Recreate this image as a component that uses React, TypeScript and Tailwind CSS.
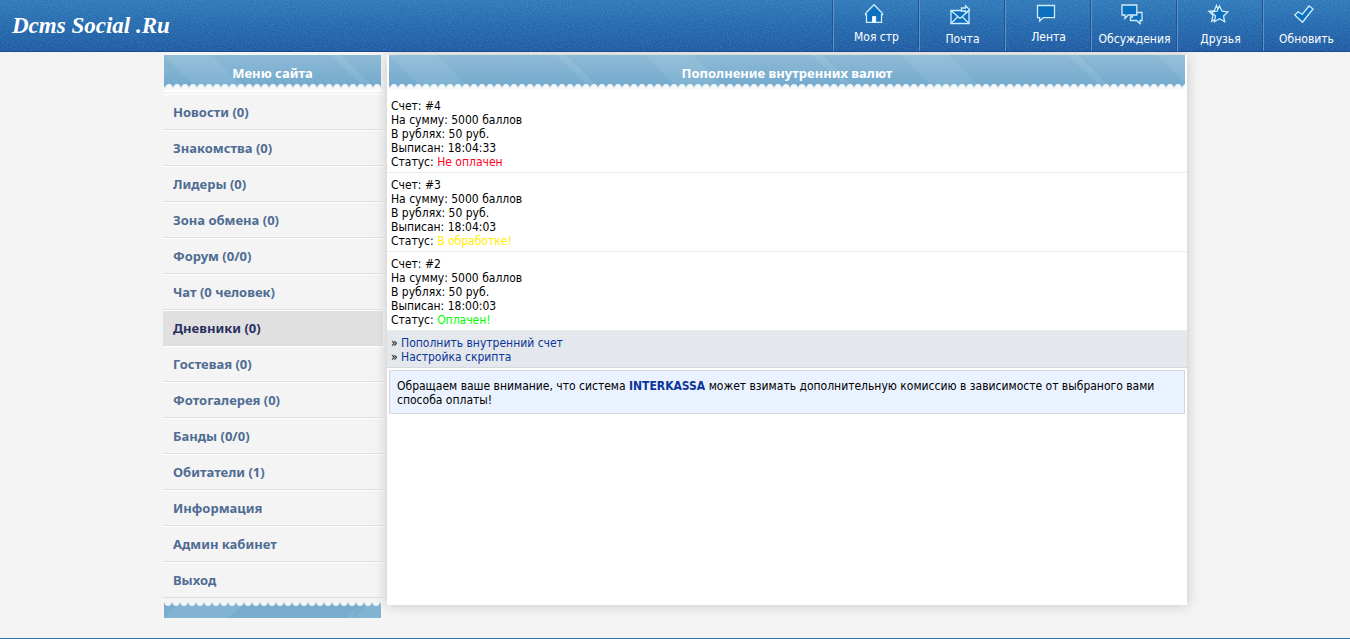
import type { ReactNode } from "react";

type NavItem = { label: string; icon: ReactNode; low?: boolean };

const MENU = [
    "Новости (0)",
    "Знакомства (0)",
    "Лидеры (0)",
    "Зона обмена (0)",
    "Форум (0/0)",
    "Чат (0 человек)",
    "Дневники (0)",
    "Гостевая (0)",
    "Фотогалерея (0)",
    "Банды (0/0)",
    "Обитатели (1)",
    "Информация",
    "Админ кабинет",
    "Выход",
];

const ACTIVE = "Дневники (0)";

const BILLS = [
    { id: 4, time: "18:04:33", status: "Не оплачен", color: "text-[#ff0022]" },
    { id: 3, time: "18:04:03", status: "В обработке!", color: "text-[#ffee00]" },
    { id: 2, time: "18:00:03", status: "Оплачен!", color: "text-[#00ff00]" },
];

function Icon({ children }: { children: ReactNode }) {
    return (
        <svg width="24" height="24" viewBox="0 0 24 24" fill="#0a70bf" stroke="#d3ecf9" strokeWidth="1.3" aria-hidden="true">
            {children}
        </svg>
    );
}

const NAV: NavItem[] = [
    {
        label: "Моя стр",
        icon: (
            <Icon>
                <path d="M3.500 11.500 12 2.800l8.500 8.700v1.200h-1V20.300H4.500v-7.600h-1z" />
                <path d="M10.500 20v-5.500h3.200V20z" fill="#fff" stroke="#fff" strokeWidth=".8" />
            </Icon>
        ),
    },
    {
        label: "Почта",
        low: true,
        icon: (
            <Icon>
                <path d="M3 8.500h18v13H3z" />
                <path d="m3 8.500 9 8 9-8M3 21.500l6.700-6.800m11.300 6.800-6.700-6.800" fill="none" />
                <path d="M13.500 6h4V3.800l4 3.700-4 3.700V9h-4z" />
            </Icon>
        ),
    },
    {
        label: "Лента",
        icon: (
            <Icon>
                <path d="M3.500 3.500h17v12.200H9.200L5.700 19v-3.300H3.500z" />
            </Icon>
        ),
    },
    {
        label: "Обсуждения",
        low: true,
        icon: (
            <Icon>
                <path d="M12.500 10.500h9.500v8h-2v3l-3.500-3h-6v-3.500h2z" />
                <path d="M2 3h14.800v10H8l-3 3.500V13H2z" />
            </Icon>
        ),
    },
    {
        label: "Друзья",
        low: true,
        icon: (
            <Icon>
                <path d="M12 7.500 10.500 3.500 8.300 8.700l-5.500.6 4.200 4-1.300 5.900 3-1.700" />
                <path d="m13.500 4 2.500 5.200 5.800.7-4.300 4 1.200 5.900-5.200-3-5.200 3 1.200-5.900-4.300-4 5.800-.7z" />
            </Icon>
        ),
    },
    {
        label: "Обновить",
        low: true,
        icon: (
            <Icon>
                <path d="m2.800 13 3.400-3.200 4 2.700 6.800-8.500 4 3-10.500 13.200z" />
            </Icon>
        ),
    },
];

function Noise() {
    return (
        <svg className="pointer-events-none absolute inset-0 h-full w-full opacity-12" aria-hidden="true">
            <filter id="grain">
                <feTurbulence type="fractalNoise" baseFrequency="0.7" numOctaves="2" />
                <feColorMatrix type="matrix" values="0 0 0 0 .5  0 0 0 0 .8  0 0 0 0 1  2.500 0 0 0 -.9" />
            </filter>
            <rect width="100%" height="100%" filter="url(#grain)" />
        </svg>
    );
}

function Ribbon({ title, id }: { title: string; id: string }) {
    return (
        <div className="relative h-[35px] overflow-hidden bg-linear-to-b from-[#8ebad5] to-[#6fa8cd]">
            <svg className="absolute inset-0 h-full w-full" aria-hidden="true">
                <defs>
                    <pattern id={`${id}-rays`} width="256" height="35" patternUnits="userSpaceOnUse">
                        <path d="M0 0H48L82 35H35zM167 0h10l35 35h-8z" fill="#fff" opacity=".08" />
                    </pattern>
                    <pattern id={`${id}-lace`} x="1" y="29" width="8" height="6" patternUnits="userSpaceOnUse">
                        <path d="M0 6V4Q1 0 4 0T8 4V6z" fill="#f6f8fa" />
                    </pattern>
                </defs>
                <rect width="100%" height="35" fill={`url(#${id}-rays)`} />
                <rect y="29" width="100%" height="6" fill={`url(#${id}-lace)`} />
            </svg>
            <h2 className="relative pt-2.5 text-center font-['Comic_Sans_MS','Noto_Sans',sans-serif] text-[13px] leading-4 font-bold text-white">
                {title}
            </h2>
        </div>
    );
}

function RibbonEnd() {
    return (
        <svg className="block h-4 w-full bg-[#78add0]" aria-hidden="true">
            <defs>
                <pattern id="end-rays" width="190" height="16" patternUnits="userSpaceOnUse">
                    <path d="M0 16 16 0h66L64 16zM183 16l7-8v8z" fill="#fff" opacity=".07" />
                </pattern>
                <pattern id="end-lace" width="8" height="4" patternUnits="userSpaceOnUse">
                    <path d="M0 0Q1 4 4 4T8 0z" fill="#f4f4f4" />
                </pattern>
            </defs>
            <rect width="100%" height="16" fill="url(#end-rays)" />
            <rect width="100%" height="4" fill="url(#end-lace)" />
        </svg>
    );
}

function Header() {
    return (
        <header className="relative flex h-[52px] justify-between border-b border-[#1b4a94] bg-linear-to-b from-[#2f79b9] via-[#2469ad] to-[#1f5aa2] pr-px">
            <Noise />
            <a href="#" className="relative pt-2 pl-3 font-['Liberation_Serif',serif] text-[23px] leading-9 font-bold text-white italic">
                Dcms Social .Ru
            </a>
            <nav className="relative flex">
                {NAV.map(item => (
                    <a
                        key={item.label}
                        href="#"
                        className="flex w-[86px] flex-col items-center border-l border-[#5b93c6] pt-0.5 text-white shadow-[-1px_0_0_#1f5592]"
                    >
                        <span className="pr-1.5">{item.icon}</span>
                        <span className={item.low ? "pt-1.5" : "pt-1"}>{item.label}</span>
                    </a>
                ))}
            </nav>
        </header>
    );
}

function Sidebar() {
    return (
        <aside className="w-[220px] shrink-0">
            <div className="mr-0.5 ml-px border-b-2 border-white">
                <Ribbon title="Меню сайта" id="side" />
            </div>
            <ul className="mt-0.5">
                {MENU.map(label => (
                    <li key={label}>
                        <a
                            href="#"
                            className={`block border-t border-b border-t-white border-b-[#dedede] px-2.5 py-2.5 font-['Noto_Sans',sans-serif] text-[13px] font-bold ${
                                label === ACTIVE ? "bg-[#e0e0e0] text-[#2b2f60]" : "text-[#4f6c93]"
                            }`}
                        >
                            {label}
                        </a>
                    </li>
                ))}
            </ul>
            <div className="mt-1 mr-0.5 ml-px">
                <RibbonEnd />
            </div>
        </aside>
    );
}

function Content() {
    return (
        <main className="min-h-[550px] min-w-0 flex-1 bg-white shadow-[0_0_12px_#c4c4c4]">
            <div className="mx-0.5 mb-1">
                <Ribbon title="Пополнение внутренних валют" id="main" />
            </div>
            {BILLS.map(bill => (
                <div key={bill.id} className="border-b border-[#ebebeb] px-1 pt-[5px] pb-[3px]">
                    <p>Счет: #{bill.id}</p>
                    <p>На сумму: 5000 баллов</p>
                    <p>В рублях: 50 руб.</p>
                    <p>Выписан: {bill.time}</p>
                    <p>
                        Статус: <span className={bill.color}>{bill.status}</span>
                    </p>
                </div>
            ))}
            <div className="border-b border-[#d5d8dd] bg-[#e4e7eb] px-1 pt-[5px] pb-[3px]">
                <p>» <a href="#" className="text-[#0b3599]">Пополнить внутренний счет</a></p>
                <p>» <a href="#" className="text-[#0b3599]">Настройка скрипта</a></p>
            </div>
            <div className="mx-0.5 mt-0.5 border border-[#d2d5da] bg-[#eaf2ff] px-[7px] pt-2 pb-1.5">
                Обращаем ваше внимание, что система <b className="text-[#0b3599]">INTERKASSA</b> может взимать
                дополнительную комиссию в зависимосте от выбраного вами способа оплаты!
            </div>
        </main>
    );
}

export default function App() {
    return (
        <div className="bg-[#f4f4f4] font-['DejaVu_Sans_Condensed','Noto_Sans',sans-serif] text-[12px] leading-[14px] text-black">
            <Header />
            <div className="mx-auto flex max-w-[1024px] items-start gap-1 pt-[3px]">
                <Sidebar />
                <Content />
            </div>
            <footer className="mt-5 h-px bg-[#2a78ba]" />
        </div>
    );
}
